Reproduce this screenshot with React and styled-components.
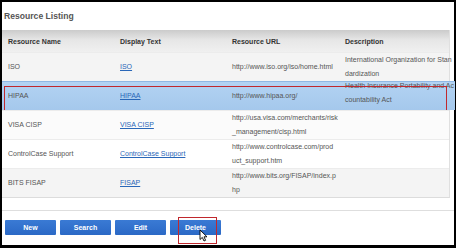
import React from "react";
import styled, { createGlobalStyle } from "styled-components";

const GlobalStyle = createGlobalStyle`
  html, body {
    margin: 0;
    padding: 0;
    background: #000;
  }
  body {
    font-family: "Liberation Sans", Arial, sans-serif;
  }
`;

const resources = [
  {
    name: "ISO",
    text: "ISO",
    url: ["http://www.iso.org/iso/home.html"],
    desc: ["International Organization for Stan", "dardization"],
    shade: "#f4f4f4",
  },
  {
    name: "HIPAA",
    text: "HIPAA",
    url: ["http://www.hipaa.org/"],
    desc: ["Health Insurance Portability and Ac", "countability Act"],
    selected: true,
  },
  {
    name: "VISA CISP",
    text: "VISA CISP",
    url: ["http://usa.visa.com/merchants/risk", "_management/cisp.html"],
    desc: [],
    shade: "#fbfbfb",
  },
  {
    name: "ControlCase Support",
    text: "ControlCase Support",
    url: ["http://www.controlcase.com/prod", "uct_support.htm"],
    desc: [],
    shade: "#fff",
  },
  {
    name: "BITS FISAP",
    text: "FISAP",
    url: ["http://www.bits.org/FISAP/index.p", "hp"],
    desc: [],
    shade: "#f4f4f4",
  },
];

function App() {
  return (
    <>
      <GlobalStyle />
      <Frame>
        <Panel>
          <Title>Resource Listing</Title>
          <Table>
            <HeaderRow>
              <HeadCell>Resource Name</HeadCell>
              <HeadCell>Display Text</HeadCell>
              <HeadCell>Resource URL</HeadCell>
              <HeadCell>Description</HeadCell>
            </HeaderRow>
            {resources.map((r) => (
              <Row key={r.name} shade={r.shade} selected={r.selected}>
                <Cell>{r.name}</Cell>
                <Cell>
                  <LinkText>{r.text}</LinkText>
                </Cell>
                <Cell>
                  {r.url.map((l) => (
                    <Line key={l}>{l}</Line>
                  ))}
                </Cell>
                <Cell raised={r.selected}>
                  {r.desc.map((l) => (
                    <Line key={l}>{l}</Line>
                  ))}
                </Cell>
                {r.selected && <Marker />}
              </Row>
            ))}
          </Table>
          <Divider />
          <Buttons>
            <Button>New</Button>
            <Button>Search</Button>
            <Button>Edit</Button>
            <ButtonWrap>
              <Button>Delete</Button>
              <MarkerBox />
              <Cursor viewBox="0 0 9 13">
                <path
                  d="M1 1 L1 10.5 L3.3 8.4 L5 12 L6.6 11.3 L5 7.8 L8 7.8 Z"
                  fill="#fff"
                  stroke="#000"
                  strokeWidth="0.9"
                  strokeLinejoin="round"
                />
              </Cursor>
            </ButtonWrap>
          </Buttons>
        </Panel>
      </Frame>
    </>
  );
}

const Frame = styled.div`
  width: 456px;
  height: 248px;
  box-sizing: border-box;
  padding: 2px 2px 3px 2px;
  background: #000;
`;

const Panel = styled.div`
  height: 100%;
  background: #fff;
  display: flex;
  flex-direction: column;
`;

const Title = styled.div`
  height: 28px;
  display: flex;
  align-items: center;
  padding-left: 2px;
  font-size: 8.6px;
  font-weight: bold;
  color: #555;
`;

const Table = styled.div`
  width: 448px;
  border-right: 1px solid #e0e0e0;
  border-bottom: 1px solid #dcdcdc;
  box-sizing: border-box;
`;

const HeaderRow = styled.div`
  height: 22px;
  display: grid;
  grid-template-columns: 112px 112px 113px 1fr;
  align-items: center;
  background: linear-gradient(#cbcbcb, #e6e6e6 45%, #f0f0f0);
`;

const HeadCell = styled.div`
  padding-left: 6px;
  font-size: 7px;
  font-weight: bold;
  color: #333;
`;

const Row = styled.div`
  position: relative;
  height: 29px;
  display: grid;
  grid-template-columns: 112px 112px 113px 1fr;
  align-items: center;
  border-top: 1px solid ${(p) => (p.selected ? "#8fb8e4" : "#ececec")};
  box-sizing: border-box;
  background: ${(p) =>
    p.selected ? "linear-gradient(#b3d3f3, #a5c8ec)" : p.shade};
  margin-right: ${(p) => (p.selected ? "-6px" : "0")};
`;

const Cell = styled.div`
  padding-left: 6px;
  font-size: 7px;
  line-height: 14px;
  color: #555;
  white-space: nowrap;
  margin-top: ${(p) => (p.raised ? "-6px" : "0")};
`;

const Line = styled.div``;

const LinkText = styled.span`
  color: #2a67b8;
  text-decoration: underline;
`;

const Marker = styled.div`
  position: absolute;
  left: 2px;
  top: 4px;
  width: 443px;
  height: 25px;
  border: 1.5px solid #c0282d;
  box-sizing: border-box;
  pointer-events: none;
`;

const Divider = styled.div`
  margin-top: 12px;
  height: 1px;
  background: #dedede;
`;

const Buttons = styled.div`
  display: flex;
  gap: 4px;
  padding: 9px 0 0 3px;
`;

const Button = styled.div`
  width: 51px;
  height: 15px;
  display: flex;
  align-items: center;
  justify-content: center;
  background: linear-gradient(#3a7ad4, #2b69c6);
  color: #fff;
  font-size: 7px;
  font-weight: bold;
  border-radius: 1px;
`;

const ButtonWrap = styled.div`
  position: relative;
`;

const MarkerBox = styled.div`
  position: absolute;
  left: 8px;
  top: -3px;
  width: 39px;
  height: 27px;
  border: 1.5px solid #c0282d;
  box-sizing: border-box;
`;

const Cursor = styled.svg`
  position: absolute;
  left: 29px;
  top: 9px;
  width: 9px;
  height: 13px;
`;

export default App;
